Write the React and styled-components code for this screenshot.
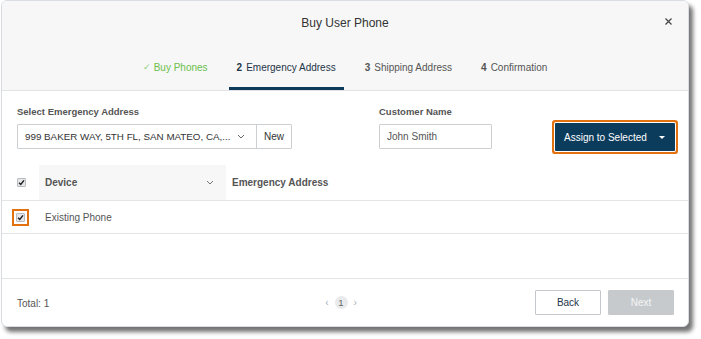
import React from 'react'
import styled, { createGlobalStyle } from 'styled-components'

const GlobalStyle = createGlobalStyle`
  html, body {
    margin: 0;
    padding: 0;
    background: #ffffff;
    font-family: "Liberation Sans", Arial, sans-serif;
  }
`;

const Page = styled.div`
  width: 701px;
  height: 339px;
  padding: 0 0 0 1px;
  box-sizing: border-box;
`;

const Dialog = styled.div`
  width: 688px;
  height: 327px;
  box-sizing: border-box;
  border: 1px solid #d9dde1;
  border-radius: 6px;
  background: #ffffff;
  box-shadow: 4px 5px 4px rgba(0, 0, 0, 0.55);
  display: flex;
  flex-direction: column;
  overflow: hidden;
`;

const Header = styled.div`
  background: #f7f7f7;
  border-bottom: 1px solid #e1e3e5;
  display: flex;
  flex-direction: column;
`;

const TitleRow = styled.div`
  height: 44px;
  display: flex;
  align-items: center;
  justify-content: center;
  position: relative;
`;

const Title = styled.h1`
  margin: 0;
  font-size: 12px;
  font-weight: normal;
  color: #333;
`;

const Close = styled.button`
  position: absolute;
  right: 14px;
  top: 14px;
  border: none;
  background: transparent;
  padding: 0;
  width: 12px;
  height: 12px;
  display: flex;
  align-items: center;
  justify-content: center;
  cursor: pointer;
`;

const Tabs = styled.div`
  height: 45px;
  display: flex;
  justify-content: center;
  gap: 13px;
`;

const Tab = styled.div`
  padding: 2px 8px 0;
  display: flex;
  align-items: center;
  gap: 4px;
  font-size: 10px;
  color: ${({ done, active }) => (done ? '#6cbf4c' : active ? '#1c3447' : '#555')};
  border-bottom: 3px solid ${({ active }) => (active ? '#0d3a5a' : 'transparent')};
`;

const StepNum = styled.span`
  font-weight: bold;
  color: ${({ active }) => (active ? '#1c3447' : '#555')};
`;

const Tick = styled.span`
  color: #8fd07a;
  font-size: 9px;
  margin-right: -1px;
`;

const FormRow = styled.div`
  display: flex;
  align-items: flex-start;
  padding: 14px 13px 0 15px;
`;

const Field = styled.div`
  display: flex;
  flex-direction: column;
  gap: 5px;
  margin-right: ${({ gapRight }) => gapRight || 0}px;
`;

const Label = styled.label`
  font-size: 9.5px;
  font-weight: bold;
  color: #555;
  line-height: 14px;
`;

const SelectGroup = styled.div`
  display: flex;
  height: 25px;
  border: 1px solid #cdd0d3;
  box-sizing: border-box;
  border-radius: 1px;
`;

const SelectBox = styled.div`
  width: 238px;
  display: flex;
  align-items: center;
  justify-content: space-between;
  padding: 0 11px 0 7px;
  box-sizing: border-box;
  font-size: 9.8px;
  color: #333;
  white-space: nowrap;
`;

const NewButton = styled.button`
  width: 35px;
  border: none;
  border-left: 1px solid #cdd0d3;
  background: #fff;
  font-family: inherit;
  font-size: 10px;
  color: #333;
  padding: 0;
`;

const TextInput = styled.input`
  width: 113px;
  height: 25px;
  box-sizing: border-box;
  border: 1px solid #cdd0d3;
  border-radius: 1px;
  padding: 0 7px;
  font-family: inherit;
  font-size: 10px;
  color: #555;
  outline: none;
`;

const AssignButton = styled.button`
  margin-left: auto;
  margin-top: 18px;
  width: 120px;
  height: 28px;
  background: #0c3c5c;
  color: #fff;
  border: none;
  border-radius: 1px;
  box-shadow: 0 0 0 1px #ffffff, 0 0 0 3px #e2710f;
  font-family: inherit;
  font-size: 10px;
  display: flex;
  align-items: center;
  justify-content: space-between;
  padding: 0 10px 0 9px;
`;

const Table = styled.div`
  margin-top: 14px;
  display: flex;
  flex-direction: column;
`;

const HeadRow = styled.div`
  display: grid;
  grid-template-columns: 37px 187px 1fr;
  height: 35px;
  border-bottom: 1px solid #e3e5e7;
`;

const BodyRow = styled.div`
  display: grid;
  grid-template-columns: 37px 187px 1fr;
  height: 32px;
  border-bottom: 1px solid #e3e5e7;
`;

const CheckCell = styled.div`
  display: flex;
  align-items: center;
  justify-content: center;
  padding-left: 2px;
`;

const HeadCell = styled.div`
  display: flex;
  align-items: center;
  justify-content: space-between;
  padding: 0 12px 0 6px;
  font-size: 10px;
  font-weight: bold;
  color: #555;
  background: ${({ sorted }) => (sorted ? '#f7f7f7' : 'transparent')};
`;

const Cell = styled.div`
  display: flex;
  align-items: center;
  padding: 0 6px;
  font-size: 10px;
  color: #555;
`;

const Highlight = styled.div`
  width: 17px;
  height: 17px;
  box-sizing: border-box;
  border: 2px solid #e2710f;
  display: flex;
  align-items: center;
  justify-content: center;
  margin-left: -3px;
`;

const Box = styled.span`
  width: 9px;
  height: 9px;
  box-sizing: border-box;
  border: 1px solid #b9bcbf;
  background: #e6e7e8;
  border-radius: 1px;
  display: flex;
  align-items: center;
  justify-content: center;
`;

const Spacer = styled.div`
  flex: 1;
`;

const Footer = styled.div`
  height: 47px;
  border-top: 1px solid #e3e5e7;
  display: grid;
  grid-template-columns: 1fr auto 1fr;
  align-items: center;
  padding: 0 14px 0 15px;
`;

const Total = styled.div`
  font-size: 10px;
  color: #555;
  padding-top: 1px;
`;

const Pager = styled.div`
  display: flex;
  align-items: center;
  gap: 6px;
  margin-right: 9px;
  color: #a5afb8;
  font-size: 10px;
`;

const PageNum = styled.span`
  width: 13px;
  height: 13px;
  border-radius: 50%;
  background: #e9eaeb;
  color: #666;
  font-size: 9.5px;
  display: flex;
  align-items: center;
  justify-content: center;
`;

const Actions = styled.div`
  display: flex;
  justify-content: flex-end;
  gap: 7px;
`;

const FooterButton = styled.button`
  width: 66px;
  height: 25px;
  border-radius: 1px;
  font-family: inherit;
  font-size: 10px;
  border: 1px solid ${({ primary }) => (primary ? '#c7cacd' : '#c4c8cc')};
  background: ${({ primary }) => (primary ? '#c7cacd' : '#fff')};
  color: ${({ primary }) => (primary ? '#f4f5f6' : '#1c3447')};
  padding: 0;
`;

const Check = () => (
  <Box>
    <svg width="7" height="7" viewBox="0 0 8 8">
      <path d="M1.2 4.2 L3.2 6.2 L6.8 1.6" fill="none" stroke="#222" strokeWidth="1.7" />
    </svg>
  </Box>
)

const Chevron = ({ color = '#666' }) => (
  <svg width="8" height="5" viewBox="0 0 8 5">
    <path d="M1 1 L4 4 L7 1" fill="none" stroke={color} strokeWidth="1" />
  </svg>
)

const App = () => {
  const steps = [
    { label: 'Buy Phones', done: true },
    { n: 2, label: 'Emergency Address', active: true },
    { n: 3, label: 'Shipping Address' },
    { n: 4, label: 'Confirmation' },
  ]
  return (
    <Page>
      <GlobalStyle />
      <Dialog>
        <Header>
          <TitleRow>
            <Title>Buy User Phone</Title>
            <Close aria-label="close">
              <svg width="7" height="7" viewBox="0 0 7 7">
                <path d="M0.5 0.5 L6.5 6.5 M6.5 0.5 L0.5 6.5" stroke="#444" strokeWidth="1.2" />
              </svg>
            </Close>
          </TitleRow>
          <Tabs>
            {steps.map((s) => (
              <Tab key={s.label} done={s.done} active={s.active}>
                {s.done ? <Tick>✓</Tick> : <StepNum active={s.active}>{s.n}</StepNum>}
                <span>{s.label}</span>
              </Tab>
            ))}
          </Tabs>
        </Header>

        <FormRow>
          <Field gapRight={87}>
            <Label>Select Emergency Address</Label>
            <SelectGroup>
              <SelectBox>
                <span>999 BAKER WAY, 5TH FL, SAN MATEO, CA,...</span>
                <Chevron />
              </SelectBox>
              <NewButton>New</NewButton>
            </SelectGroup>
          </Field>
          <Field>
            <Label>Customer Name</Label>
            <TextInput defaultValue="John Smith" />
          </Field>
          <AssignButton>
            <span>Assign to Selected</span>
            <svg width="6" height="3" viewBox="0 0 6 3">
              <path d="M0 0 L6 0 L3 3 Z" fill="#fff" />
            </svg>
          </AssignButton>
        </FormRow>

        <Table>
          <HeadRow>
            <CheckCell><Check /></CheckCell>
            <HeadCell sorted>
              <span>Device</span>
              <Chevron color="#777" />
            </HeadCell>
            <HeadCell>Emergency Address</HeadCell>
          </HeadRow>
          <BodyRow>
            <CheckCell>
              <Highlight><Check /></Highlight>
            </CheckCell>
            <Cell>Existing Phone</Cell>
            <Cell />
          </BodyRow>
        </Table>

        <Spacer />

        <Footer>
          <Total>Total: 1</Total>
          <Pager>
            <span>‹</span>
            <PageNum>1</PageNum>
            <span>›</span>
          </Pager>
          <Actions>
            <FooterButton>Back</FooterButton>
            <FooterButton primary>Next</FooterButton>
          </Actions>
        </Footer>
      </Dialog>
    </Page>
  )
}

export default App
